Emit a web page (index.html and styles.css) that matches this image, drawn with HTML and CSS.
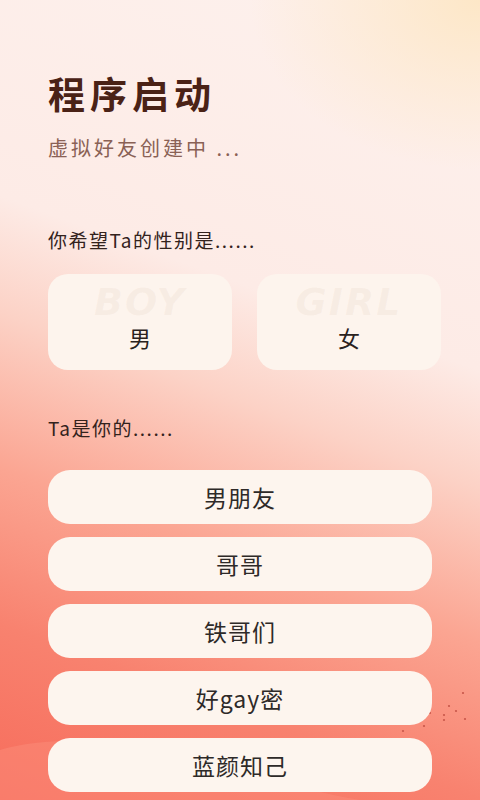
FILE: index.html
```html
<!DOCTYPE html>
<html lang="zh-CN">
<head>
<meta charset="utf-8">
<title>程序启动</title>
<link rel="stylesheet" href="styles.css">
</head>
<body>
<div class="screen">
  <svg class="wave" viewBox="0 0 480 80" preserveAspectRatio="none" aria-hidden="true">
    <path d="M0 30 C40 18 110 16 170 32 C230 48 300 70 360 80 L0 80 Z" fill="#fb8b79" opacity="0.55"/>
  </svg>
  <svg class="dots" viewBox="0 0 70 50" aria-hidden="true">
    <circle cx="63" cy="4" r="1.1"/>
    <circle cx="49" cy="17" r="1.1"/>
    <circle cx="56" cy="22" r="1.1"/>
    <circle cx="44" cy="26" r="1.1"/>
    <circle cx="30" cy="24" r="1.1"/>
    <circle cx="44" cy="31" r="1.1"/>
    <circle cx="65" cy="30" r="1.1"/>
    <circle cx="24" cy="37" r="1.1"/>
    <circle cx="3" cy="42" r="1.1"/>
  </svg>
  <main class="content">
    <h1 class="title">程序启动</h1>
    <p class="subtitle">虚拟好友创建中 ...</p>

    <p class="question q-gender">你希望Ta的性别是......</p>
    <div class="gender-row">
      <button class="gender-card"><span class="watermark">BOY</span><span class="gender-label">男</span></button>
      <button class="gender-card"><span class="watermark">GIRL</span><span class="gender-label">女</span></button>
    </div>

    <p class="question q-relation">Ta是你的......</p>
    <div class="options">
      <button class="option">男朋友</button>
      <button class="option">哥哥</button>
      <button class="option">铁哥们</button>
      <button class="option">好gay密</button>
      <button class="option">蓝颜知己</button>
    </div>
  </main>
</div>
</body>
</html>
```

FILE: styles.css
```css
* { box-sizing: border-box; }
html, body { margin: 0; padding: 0; }
body {
  width: 480px;
  height: 800px;
  overflow: hidden;
  font-family: "Noto Sans CJK SC", "Noto Sans", sans-serif;
}
.screen {
  position: relative;
  width: 480px;
  height: 800px;
  overflow: hidden;
  background:
    radial-gradient(ellipse 230px 170px at 480px 0px, rgba(253, 230, 195, 0.9) 0, rgba(253, 230, 195, 0.45) 50%, rgba(253, 230, 195, 0) 100%),
    linear-gradient(200deg, #fdf1ed 0%, #fdebe6 38%, #fcd2c6 50%, #fba592 66%, #f8826f 82%, #f76c5b 100%);
}
.wave {
  position: absolute;
  left: 0;
  bottom: 0;
  width: 480px;
  height: 80px;
}
.dots {
  position: absolute;
  left: 400px;
  top: 689px;
  width: 70px;
  height: 50px;
  fill: #c9574a;
}
.content {
  position: relative;
  padding: 73px 0 0 48px;
}
.title {
  margin: 0;
  font-size: 37px;
  line-height: 40px;
  font-weight: 700;
  letter-spacing: 5px;
  color: #4a2216;
}
.subtitle {
  margin: 23px 0 0;
  font-size: 20px;
  line-height: 24px;
  letter-spacing: 3px;
  color: #8a6155;
}
.question {
  margin: 0;
  font-size: 19px;
  line-height: 24px;
  font-weight: 400;
  letter-spacing: 1.5px;
  color: #33221c;
}
.q-gender { margin-top: 68px; }
.q-relation { margin-top: 46px; }
.gender-row {
  display: flex;
  gap: 25px;
  margin-top: 22px;
}
.gender-card {
  position: relative;
  width: 184px;
  height: 96px;
  border: none;
  border-radius: 20px;
  background: #fdf4ed;
  padding: 0 0 19px;
  display: flex;
  flex-direction: column;
  justify-content: flex-end;
  align-items: center;
  font-family: inherit;
}
.watermark {
  position: absolute;
  top: 9px;
  left: 0;
  right: 0;
  text-align: center;
  font-family: "DejaVu Sans", sans-serif;
  font-size: 38px;
  line-height: 38px;
  font-weight: 700;
  font-style: italic;
  letter-spacing: 2px;
  color: rgba(190, 160, 140, 0.09);
}
.gender-label {
  position: relative;
  font-size: 22px;
  line-height: 28px;
  color: #2a2220;
}
.options {
  display: flex;
  flex-direction: column;
  gap: 13px;
  margin-top: 30px;
  width: 384px;
}
.option {
  height: 54px;
  border: none;
  border-radius: 22px;
  background: #fdf5ee;
  font-family: inherit;
  font-size: 23px;
  letter-spacing: 1px;
  color: #2e2a28;
  padding: 0;
}
```
